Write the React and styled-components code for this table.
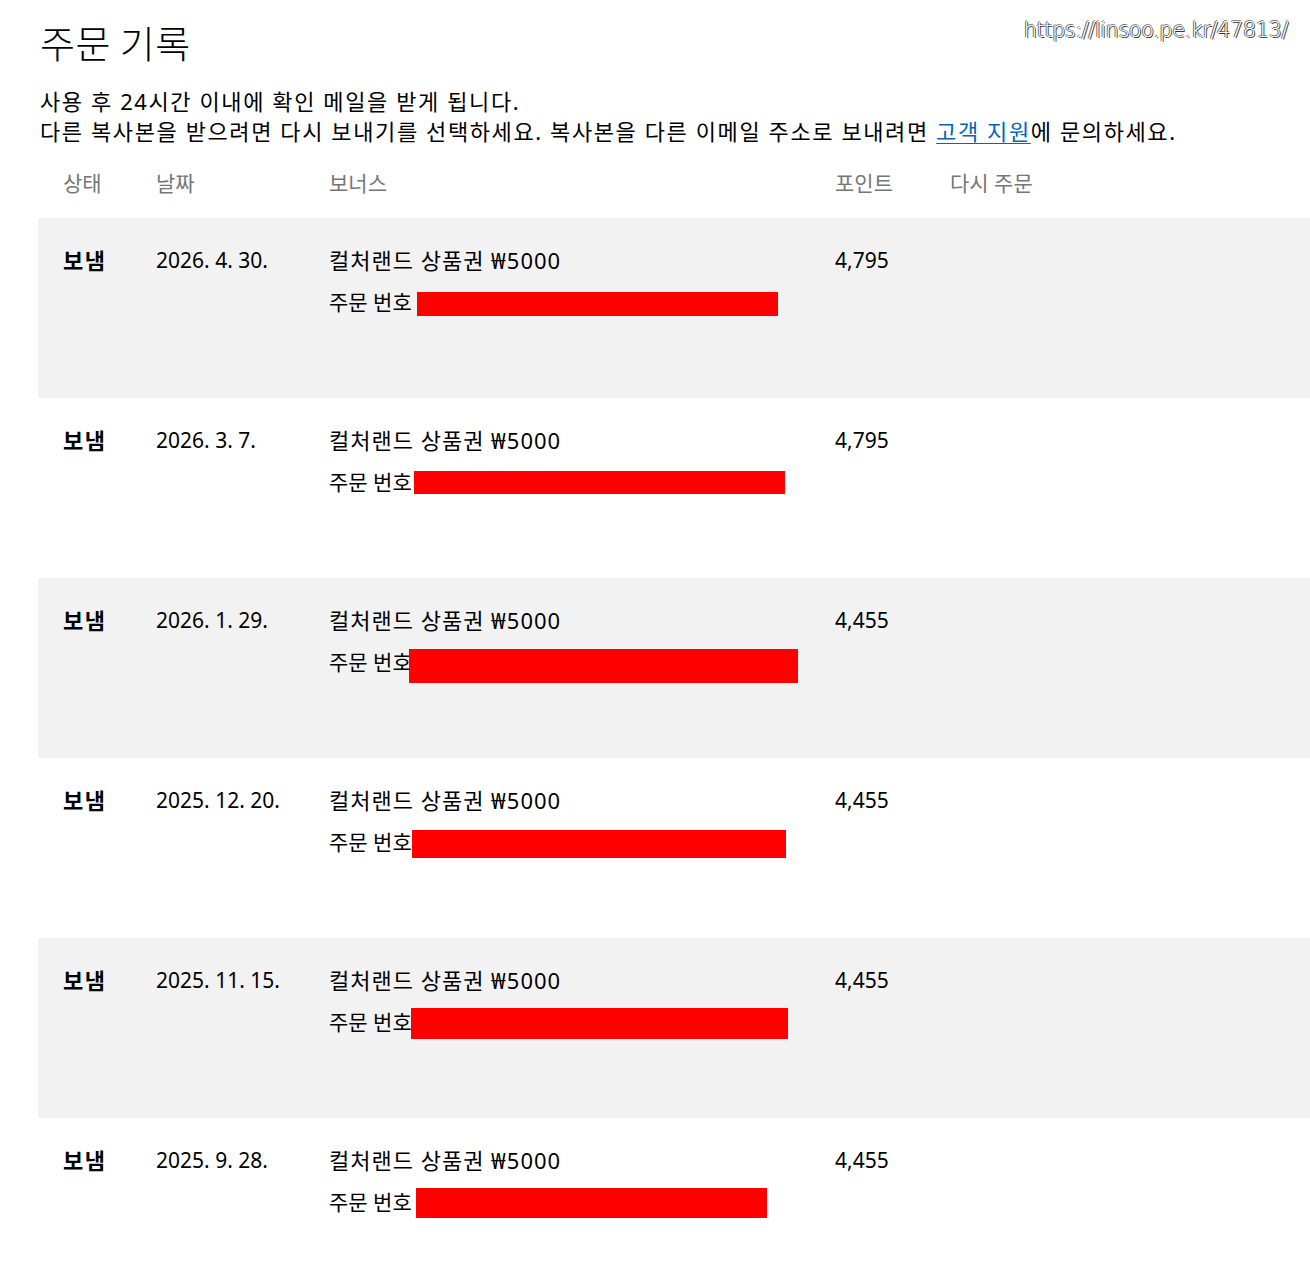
import React from "react";
import styled, { createGlobalStyle } from "styled-components";

const Global = createGlobalStyle`
  html, body { margin: 0; padding: 0; background: #ffffff; }
  body {
    font-family: "Noto Sans", "Noto Sans CJK KR", sans-serif;
    color: #000;
  }
`;

const Page = styled.div`
  position: relative;
  width: 1310px;
  height: 1276px;
  overflow: hidden;
  padding: 18px 0 0 38px;
  box-sizing: border-box;
`;

const Watermark = styled.div`
  position: absolute;
  top: 18px;
  right: 22px;
  font-family: "DejaVu Sans", "Noto Sans", sans-serif;
  font-weight: 200;
  font-size: 21px;
  letter-spacing: -0.5px;
  color: #ffffff;
  text-shadow: 1px 1px 0 #333, -1px 0 0 #555, 0 -1px 0 #777;
`;

const Title = styled.h1`
  margin: 0 0 0 2px;
  font-family: "Noto Sans CJK KR", sans-serif;
  font-weight: 300;
  font-size: 38px;
  letter-spacing: 0.5px;
  line-height: 48px;
`;

const Description = styled.p`
  margin: 20px 0 0 2px;
  font-size: 22px;
  letter-spacing: 1.6px;
  line-height: 30px;
  font-weight: 400;
`;

const Link = styled.a`
  color: #0067b8;
  text-decoration: underline;
  text-decoration-thickness: 1px;
  text-underline-offset: 3px;
`;

const Grid = styled.div`
  display: grid;
  grid-template-columns: 93px 173px 506px 115px 1fr;
  padding-left: 25px;
`;

const HeaderRow = styled(Grid)`
  margin-top: 18px;
  height: 36px;
  align-items: center;
  font-size: 21px;
  color: #767676;
  margin-bottom: 18px;
`;

const Row = styled(Grid)`
  height: 180px;
  box-sizing: border-box;
  padding-top: 28px;
  background: ${(p) => (p.$shaded ? "#f2f2f2" : "#ffffff")};
  margin-right: -40px;
`;

const Status = styled.div`
  font-size: 22px;
  line-height: 28px;
  letter-spacing: 1.5px;
  font-weight: 600;
`;

const Cell = styled.div`
  font-size: 21px;
  line-height: 28px;
`;

const BonusName = styled.div`
  font-size: 22px;
  letter-spacing: 1px;
  line-height: 28px;
`;

const OrderLine = styled.div`
  position: relative;
  margin-top: 14px;
  font-size: 21px;
  line-height: 28px;
`;

const Redaction = styled.span`
  position: absolute;
  background: #ff0000;
`;

const orders = [
  { date: "2026. 4. 30.", points: "4,795", bar: [88, 4, 361, 24] },
  { date: "2026. 3. 7.", points: "4,795", bar: [85, 3, 371, 23] },
  { date: "2026. 1. 29.", points: "4,455", bar: [80, 1, 389, 34] },
  { date: "2025. 12. 20.", points: "4,455", bar: [83, 2, 374, 28] },
  { date: "2025. 11. 15.", points: "4,455", bar: [82, 0, 377, 31] },
  { date: "2025. 9. 28.", points: "4,455", bar: [87, 0, 351, 30] },
];

export default function App() {
  return (
    <>
      <Global />
      <Page>
        <Watermark>https://linsoo.pe.kr/47813/</Watermark>
        <Title>주문 기록</Title>
        <Description>
          사용 후 24시간 이내에 확인 메일을 받게 됩니다.
          <br />
          다른 복사본을 받으려면 다시 보내기를 선택하세요. 복사본을 다른 이메일 주소로 보내려면{" "}
          <Link href="#">고객 지원</Link>에 문의하세요.
        </Description>
        <HeaderRow>
          <div>상태</div>
          <div>날짜</div>
          <div>보너스</div>
          <div>포인트</div>
          <div>다시 주문</div>
        </HeaderRow>
        {orders.map((o, i) => (
          <Row key={i} $shaded={i % 2 === 0}>
            <Status>보냄</Status>
            <Cell>{o.date}</Cell>
            <div>
              <BonusName>컬처랜드 상품권 ₩5000</BonusName>
              <OrderLine>
                주문 번호
                <Redaction
                  style={{
                    left: o.bar[0],
                    top: o.bar[1],
                    width: o.bar[2],
                    height: o.bar[3],
                  }}
                />
              </OrderLine>
            </div>
            <Cell>{o.points}</Cell>
            <div />
          </Row>
        ))}
      </Page>
    </>
  );
}
